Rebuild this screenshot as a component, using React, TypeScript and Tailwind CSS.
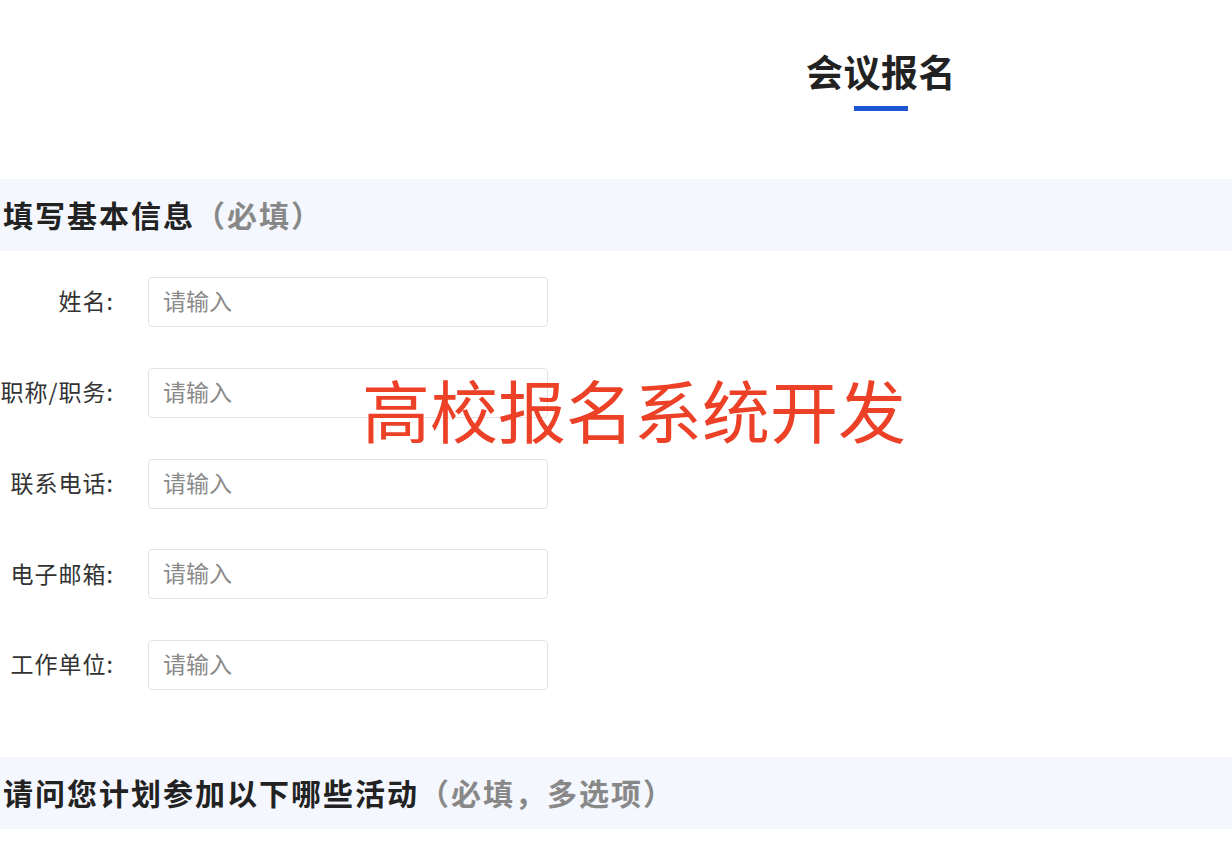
import React from 'react';

const fields = ['姓名:', '职称/职务:', '联系电话:', '电子邮箱:', '工作单位:'];

const SectionTitle = ({ title, note }: { title: string; note: string }) => (
  <div className="h-[72px] bg-[#f4f7fd] flex items-center pl-[3px]">
    <h2 className="text-[30px] font-bold text-[#222] tracking-[2px] leading-none -mt-[3px]">
      {title}
      <span className="text-[#888]">{note}</span>
    </h2>
  </div>
);

export default function App() {
  return (
    <div
      className="relative w-[1232px] h-[864px] overflow-hidden bg-white"
      style={{ fontFamily: '"Noto Sans CJK SC", "Noto Sans", sans-serif' }}
    >
      {/* page title */}
      <div className="pl-[530px] pt-[46px] flex flex-col items-center">
        <h1 className="text-[37px] font-bold text-[#222] leading-[50px] tracking-[0.5px]">会议报名</h1>
        <div className="mt-[10px] w-[54px] h-[5px] bg-[#1d55d2]" />
      </div>

      <div className="mt-[68px]">
        <SectionTitle title="填写基本信息" note="（必填）" />

        <div className="pt-[26px] flex flex-col gap-[40.75px]">
          {fields.map((label) => (
            <div key={label} className="flex items-center">
              <label className="w-[114px] shrink-0 text-right text-[23px] text-[#333] tracking-[1px] whitespace-nowrap -mt-[3px]">
                {label}
              </label>
              <input
                type="text"
                placeholder="请输入"
                className="ml-[34px] w-[400px] h-[50px] border border-[#e3e3e3] rounded-[4px] px-[14px] pb-[4px] text-[23px] text-[#333] placeholder:text-[#8a8a8a] outline-none"
              />
            </div>
          ))}
        </div>

        <div className="mt-[67px]">
          <SectionTitle title="请问您计划参加以下哪些活动" note="（必填，多选项）" />
        </div>
      </div>

      {/* watermark */}
      <div className="absolute left-[362px] top-[366px] text-[68px] leading-[86px] text-[#ec4127] whitespace-nowrap pointer-events-none">
        高校报名系统开发
      </div>
    </div>
  );
}
